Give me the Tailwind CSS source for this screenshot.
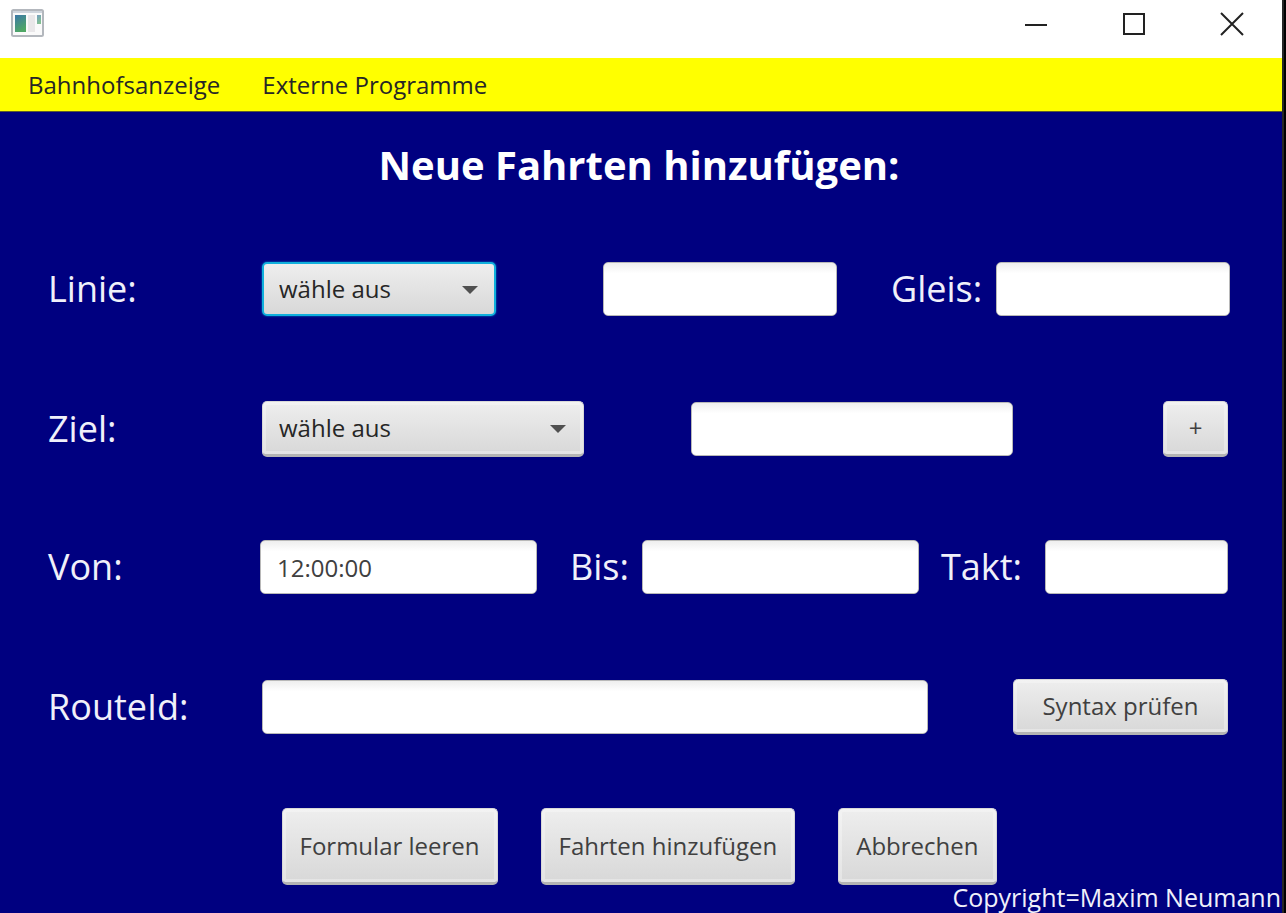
<!DOCTYPE html>
<html lang="de">
<head>
<meta charset="utf-8">
<title>Bahnhofsanzeige</title>
<script src="https://cdn.jsdelivr.net/npm/@tailwindcss/browser@4"></script>
</head>
<body class="flex min-h-screen bg-black font-['Open_Sans','Noto_Sans',sans-serif] text-2xl text-neutral-700">
<div class="flex min-h-screen min-w-0 flex-1 flex-col bg-[#000080]">
  <header class="flex h-[58px] items-start justify-between bg-white pr-px pl-[11px]">
    <svg class="mt-[9px] h-7 w-[33px]" viewBox="0 0 33 28" aria-hidden="true">
      <defs>
        <linearGradient id="pane" x1="0" y1="0" x2="0.4" y2="1"><stop offset="0" stop-color="#3b77a8"/><stop offset="1" stop-color="#4fa765"/></linearGradient>
      </defs>
      <rect x="1" y="1" width="31" height="26" rx="1.5" fill="#fafafa" stroke="#b3b7bd" stroke-width="2"/>
      <path d="M2 3h29" stroke="#cfd5dd" stroke-width="2"/>
      <rect x="4" y="6" width="11" height="17" fill="url(#pane)"/>
      <rect x="17" y="6" width="7" height="17" fill="#e9e7e9"/>
      <rect x="26" y="6" width="4" height="9" fill="url(#pane)" opacity=".7"/>
    </svg>
    <div class="flex h-12">
      <button aria-label="Minimieren" class="flex w-[98px] items-center justify-center"><svg class="size-6" viewBox="0 0 24 24" stroke="#222" stroke-width="2" fill="none"><path d="M1 13h22"/></svg></button>
      <button aria-label="Maximieren" class="flex w-[98px] items-center justify-center"><svg class="size-6" viewBox="0 0 24 24" stroke="#222" stroke-width="2" fill="none"><path d="M2 2h20v20H2z"/></svg></button>
      <button aria-label="Schließen" class="flex w-[98px] items-center justify-center"><svg class="size-6" viewBox="0 0 24 24" stroke="#222" stroke-width="2" fill="none"><path d="M1 1l22 22M23 1L1 23"/></svg></button>
    </div>
  </header>
  <nav class="flex h-[54px] items-center gap-[42px] border-b border-[#5c5c30] bg-[#ff0] pl-7 text-neutral-800">
    <button>Bahnhofsanzeige</button>
    <button>Externe Programme</button>
  </nav>
  <main class="flex flex-1 flex-col">
    <h1 class="mt-[26px] pr-1 text-center text-[40px] leading-[54px] font-bold text-white">Neue Fahrten hinzufügen:</h1>
    <form class="mt-[70px] pr-[52px] pl-12">
      <div class="flex flex-col gap-[85px]">
        <div class="grid h-[54px] grid-cols-[214fr_234fr_107fr_234fr_54fr_105fr_234fr] items-center">
          <label for="linie" class="text-4xl text-[#f0f0fa]">Linie:</label>
          <div class="relative">
            <select id="linie" class="block h-[54px] w-full appearance-none rounded-[5px] border-2 border-[#10b0dc] bg-linear-to-b from-[#eeeeee] to-[#d8d8d8] pl-[15px] text-neutral-800 shadow-[0_0_2px_#039ed3]"><option>wähle aus</option></select>
            <svg class="pointer-events-none absolute top-6 right-[18px] h-2 w-4" viewBox="0 0 16 8" fill="#505050"><path d="M0 0h16L8 8z"/></svg>
          </div>
          <input aria-label="Neue Linie" class="col-start-4 h-[54px] w-full min-w-0 rounded-[5px] border border-[#b8b8b8] bg-linear-to-b from-[#eeeeee] via-white via-20% to-white px-4">
          <label for="gleis" class="col-start-6 text-4xl text-[#f0f0fa]">Gleis:</label>
          <input id="gleis" class="h-[54px] w-full min-w-0 rounded-[5px] border border-[#b8b8b8] bg-linear-to-b from-[#eeeeee] via-white via-20% to-white px-4">
        </div>
        <div class="grid h-[54px] grid-cols-[214fr_322fr_107fr_322fr_150fr_65fr_2fr] items-center">
          <label for="ziel" class="text-4xl text-[#f0f0fa]">Ziel:</label>
          <div class="relative">
            <select id="ziel" class="block h-14 w-full appearance-none rounded-[5px] border border-b-3 border-[#d8d8d8] border-b-[#b4b4b4] bg-linear-to-b from-[#eeeeee] to-[#d8d8d8] pl-4 text-neutral-800 shadow-[inset_0_0_0_3px_#ffffff50]"><option>wähle aus</option></select>
            <svg class="pointer-events-none absolute top-6 right-[18px] h-2 w-4" viewBox="0 0 16 8" fill="#505050"><path d="M0 0h16L8 8z"/></svg>
          </div>
          <input aria-label="Neues Ziel" class="col-start-4 h-[54px] w-full min-w-0 rounded-[5px] border border-[#b8b8b8] bg-linear-to-b from-[#eeeeee] via-white via-20% to-white px-4">
          <button type="button" class="col-start-6 h-14 rounded-[5px] border border-b-3 border-[#d8d8d8] border-b-[#b4b4b4] bg-linear-to-b from-[#eeeeee] to-[#d8d8d8] shadow-[inset_0_0_0_3px_#ffffff50]">+</button>
        </div>
        <div class="grid h-[54px] grid-cols-[212fr_277fr_33fr_72fr_277fr_22fr_104fr_183fr_2fr] items-center">
          <label for="von" class="text-4xl text-[#f0f0fa]">Von:</label>
          <input id="von" value="12:00:00" class="h-[54px] w-full min-w-0 rounded-[5px] border border-[#b8b8b8] bg-linear-to-b from-[#eeeeee] via-white via-20% to-white px-4">
          <label for="bis" class="col-start-4 text-4xl text-[#f0f0fa]">Bis:</label>
          <input id="bis" class="h-[54px] w-full min-w-0 rounded-[5px] border border-[#b8b8b8] bg-linear-to-b from-[#eeeeee] via-white via-20% to-white px-4">
          <label for="takt" class="col-start-7 text-4xl text-[#f0f0fa]">Takt:</label>
          <input id="takt" class="h-[54px] w-full min-w-0 rounded-[5px] border border-[#b8b8b8] bg-linear-to-b from-[#eeeeee] via-white via-20% to-white px-4">
        </div>
        <div class="grid h-[54px] grid-cols-[214fr_666fr_85fr_215fr_2fr] items-center">
          <label for="route" class="text-4xl text-[#f0f0fa]">RouteId:</label>
          <input id="route" class="h-[54px] w-full min-w-0 rounded-[5px] border border-[#b8b8b8] bg-linear-to-b from-[#eeeeee] via-white via-20% to-white px-4">
          <button type="button" class="col-start-4 h-14 rounded-[5px] border border-b-3 border-[#d8d8d8] border-b-[#b4b4b4] bg-linear-to-b from-[#eeeeee] to-[#d8d8d8] whitespace-nowrap shadow-[inset_0_0_0_3px_#ffffff50]">Syntax prüfen</button>
        </div>
      </div>
      <div class="mt-[75px] flex justify-center gap-[43px]">
        <button type="reset" class="h-[77px] rounded-[5px] border border-b-3 border-[#d8d8d8] border-b-[#b4b4b4] bg-linear-to-b from-[#eeeeee] to-[#d8d8d8] px-[17px] shadow-[inset_0_0_0_3px_#ffffff50]">Formular leeren</button>
        <button type="button" class="h-[77px] rounded-[5px] border border-b-3 border-[#d8d8d8] border-b-[#b4b4b4] bg-linear-to-b from-[#eeeeee] to-[#d8d8d8] px-[17px] shadow-[inset_0_0_0_3px_#ffffff50]">Fahrten hinzufügen</button>
        <button type="button" class="h-[77px] rounded-[5px] border border-b-3 border-[#d8d8d8] border-b-[#b4b4b4] bg-linear-to-b from-[#eeeeee] to-[#d8d8d8] px-[17px] shadow-[inset_0_0_0_3px_#ffffff50]">Abbrechen</button>
      </div>
    </form>
    <footer class="mt-auto pr-px pb-1 text-right text-[25px] leading-6 text-[#f0f0fa]">Copyright=Maxim Neumann</footer>
  </main>
</div>
<div class="w-1 shrink-0 border-l-2 border-neutral-800 bg-black"></div>
</body>
</html>
